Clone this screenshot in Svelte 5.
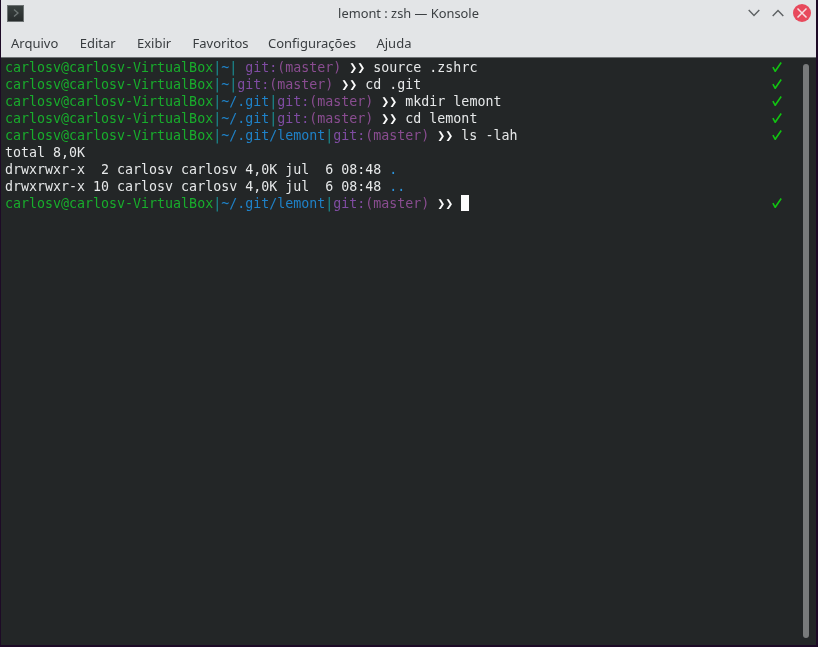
<script>
  const G = 'g', T = 't', B = 'b', P = 'p', W = 'w';
  const prompt = (dir, gap, cmd) => [
    [G, 'carlosv@carlosv-VirtualBox'], [T, '|'], [B, dir], [T, '|'], [W, gap],
    [P, 'git:'], ['m', '(master)'], [W, ' '], ['a', '❯❯'], [W, cmd]
  ];
  const rows = [
    { parts: prompt('~', ' ', ' source .zshrc'), ok: true },
    { parts: prompt('~', '', ' cd .git'), ok: true },
    { parts: prompt('~/.git', '', ' mkdir lemont'), ok: true },
    { parts: prompt('~/.git', '', ' cd lemont'), ok: true },
    { parts: prompt('~/.git/lemont', '', ' ls -lah'), ok: true },
    { parts: [[W, 'total 8,0K']] },
    { parts: [[W, 'drwxrwxr-x  2 carlosv carlosv 4,0K jul  6 08:48 '], ['d', '.']] },
    { parts: [[W, 'drwxrwxr-x 10 carlosv carlosv 4,0K jul  6 08:48 '], ['d', '..']] },
    { parts: prompt('~/.git/lemont', '', ' '), ok: true, cursor: true }
  ];
  const menus = ['Arquivo', 'Editar', 'Exibir', 'Favoritos', 'Configurações', 'Ajuda'];
</script>

<div class="desktop">
  <div class="window">
    <header class="titlebar">
      <div class="appicon">
        <svg width="10" height="10" viewBox="0 0 10 10"><path d="M3 1.5 L7 5 L3 8.5" fill="none" stroke="#6f7675" stroke-width="1.3"/></svg>
      </div>
      <div class="title">lemont : zsh — Konsole</div>
      <div class="controls">
        <svg width="12" height="8" viewBox="0 0 12 8"><path d="M0.7 1 L6 6.5 L11.3 1" fill="none" stroke="#5d6163" stroke-width="1.4"/></svg>
        <svg width="12" height="8" viewBox="0 0 12 8"><path d="M0.7 7 L6 1.5 L11.3 7" fill="none" stroke="#5d6163" stroke-width="1.4"/></svg>
        <div class="close">
          <svg width="18" height="18" viewBox="0 0 18 18"><path d="M4.5 4.5 L13.5 13.5 M13.5 4.5 L4.5 13.5" stroke="#f6dfe2" stroke-width="1.5"/></svg>
        </div>
      </div>
    </header>
    <nav class="menubar">
      {#each menus as m}<span>{m}</span>{/each}
    </nav>
    <main class="term">
      <div class="lines">
        {#each rows as r}
          <div class="row">
            <span class="text">{#each r.parts as [c, s]}<span class={c}>{s}</span>{/each}{#if r.cursor}<span class="cursor"></span>{/if}</span>
            {#if r.ok}<svg class="check" width="10" height="10" viewBox="0 0 10 10"><path d="M0.9 5.2 L3.2 9.3 L9.2 0.5" fill="none" stroke="#11c411" stroke-width="1.6"/></svg>{/if}
          </div>
        {/each}
      </div>
      <div class="scrollbar"><div class="thumb"></div></div>
    </main>
  </div>
</div>

<style>
  :global(body) { margin: 0; background: #1d0a26; }
  .desktop { width: 818px; height: 647px; padding: 0 2px 2px 1px; box-sizing: border-box; display: flex; background: #1d0a26; overflow: hidden; }
  .window { flex: 1; display: flex; flex-direction: column; min-width: 0; filter: blur(0.3px); }
  .titlebar { height: 32px; background: #e3e5e7; display: flex; align-items: center; position: relative; flex: none; padding-left: 6px; }
  .appicon { width: 17px; height: 17px; background: linear-gradient(#3a4140, #272c2c); border: 0.5px solid #6d7273; box-sizing: border-box; display: flex; align-items: center; justify-content: center; margin-bottom: 6px; }
  .title { position: absolute; left: 0; right: 0; top: 5px; text-align: center; font: 12.85px/16px "Noto Sans", sans-serif; color: #3c4043; }
  .controls { margin-left: auto; display: flex; align-items: center; gap: 12px; padding-right: 5px; margin-bottom: 7px; }
  .close { width: 18px; height: 18px; border-radius: 50%; background: #e8495c; display: flex; margin-left: -3px; }
  .menubar { height: 26px; background: #e3e5e7; display: flex; flex: none; gap: 21.4px; padding-left: 10px; font: 13px/22px "Noto Sans", sans-serif; color: #383c3f; border-bottom: 1px solid #6f7375; box-sizing: border-box; }
  .menubar span:nth-child(5) { margin-left: -2px; }
  .menubar span:nth-child(6) { margin-left: -1px; }
  .term { flex: 1; background: #232627; display: flex; min-height: 0; padding-top: 1px; }
  .lines { flex: 1; padding-left: 4px; padding-right: 21px; font: 13.3px/17px "DejaVu Sans Mono", monospace; min-width: 0; }
  .row { height: 17px; display: flex; justify-content: space-between; align-items: flex-start; white-space: pre; }
  .text { display: flex; }
  .g { color: #18ad2c; }
  .t { color: #1a8f94; }
  .b { color: #1f82c8; }
  .d { color: #2b93dc; }
  .p { color: #7f4ca2; }
  .m { color: #8a4d91; }
  .w { color: #e6e8e9; }
  .a { color: #fcfcfc; font-weight: 700; }
  .cursor { width: 8px; height: 16px; background: #fcfcfc; }
  .check { margin-top: 3px; }
  .scrollbar { width: 6px; margin-right: 7px; padding-top: 5px; padding-bottom: 7px; display: flex; }
  .thumb { flex: 1; background: #787a7b; border-radius: 3px; }
</style>
